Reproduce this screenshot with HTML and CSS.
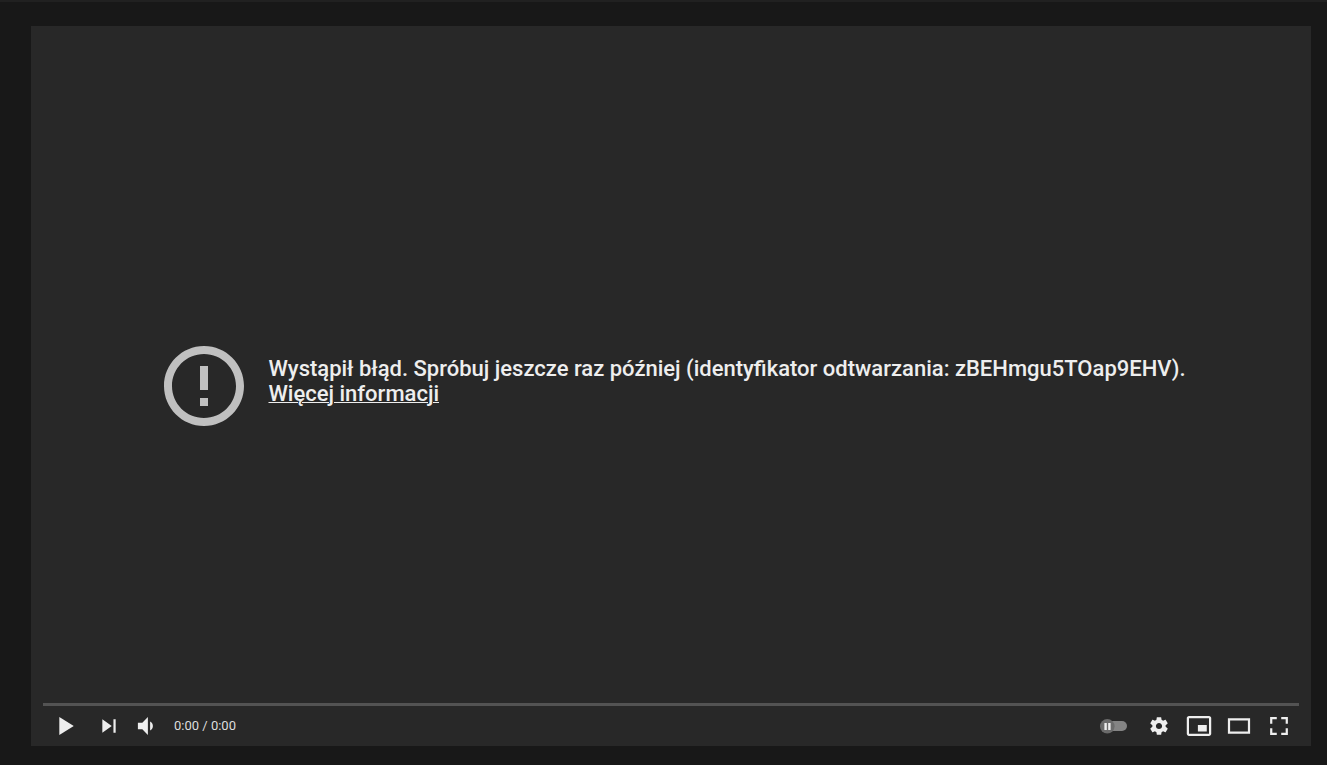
FILE: index.html
```html
<!DOCTYPE html>
<html lang="pl">

<head>
    <meta charset="UTF-8">
    <meta name="viewport" content="width=device-width, initial-scale=1.0">
    <title>Odtwarzacz wideo</title>
    <link rel="stylesheet" href="styles.css">
</head>

<body>
    <main class="player">
        <!-- Error message -->
        <div class="error">
            <svg class="error-icon" viewBox="0 0 24 24" aria-hidden="true">
                <path d="M11 15h2v2h-2v-2zm0-8h2v6h-2V7zm1-5C6.48 2 2 6.48 2 12s4.48 10 10 10 10-4.48 10-10S17.52 2 12 2zm0 18c-4.42 0-8-3.58-8-8s3.58-8 8-8 8 3.58 8 8-3.58 8-8 8z"/>
            </svg>
            <div class="error-text">
                Wystąpił błąd. Spróbuj jeszcze raz później (identyfikator odtwarzania: zBEHmgu5TOap9EHV).<br>
                <a href="#">Więcej informacji</a>
            </div>
        </div>

        <!-- Bottom controls -->
        <div class="controls">
            <div class="progress"></div>
            <div class="buttons">
                <button class="btn play" aria-label="Odtwórz">
                    <svg viewBox="0 0 36 36"><path d="M12 10v16l13-8z"/></svg>
                </button>
                <button class="btn" aria-label="Następny">
                    <svg viewBox="0 0 36 36"><path d="M12 24l8.5-6L12 12v12zM22 12v12h2V12h-2z"/></svg>
                </button>
                <button class="btn" aria-label="Wycisz">
                    <svg viewBox="0 0 36 36"><path d="M8 21h4l5 5V10l-5 5H8v6zM19 14v8c1.48-.73 2.5-2.25 2.5-4S20.48 14.73 19 14z"/></svg>
                </button>
                <span class="time">0:00 / 0:00</span>

                <button class="btn autoplay" aria-label="Autoodtwarzanie">
                    <svg viewBox="0 0 40 40">
                        <rect class="track" x="7" y="15" width="25" height="10" rx="5"/>
                        <circle class="knob" cx="12.3" cy="20.3" r="7.3"/>
                        <path d="M9.4 17h2.4v7H9.4zM13.2 17h2.4v7h-2.400z"/>
                    </svg>
                </button>
                <button class="btn" aria-label="Ustawienia">
                    <svg viewBox="0 0 36 36"><path d="m23.94 18.78c.03-.25.05-.51.05-.78 0-.27-.02-.52-.05-.78l1.68-1.32c.15-.12.19-.33.09-.51l-1.6-2.76c-.09-.17-.31-.24-.48-.17l-1.99.8c-.41-.32-.86-.58-1.35-.78l-.3-2.12c-.02-.19-.19-.33-.39-.33h-3.2c-.2 0-.36.14-.39.33l-.3 2.12c-.48.2-.93.47-1.35.78l-1.99-.8c-.18-.07-.39 0-.48.17l-1.6 2.76c-.1.17-.05.39.09.51l1.68 1.32c-.03.25-.05.52-.05.78 0 .26.02.52.05.78l-1.68 1.32c-.15.12-.19.33-.09.51l1.6 2.76c.09.17.31.24.48.17l1.99-.8c.41.32.86.58 1.35.78l.3 2.12c.02.19.19.33.39.33h3.2c.2 0 .36-.14.39-.33l.3-2.12c.48-.2.93-.47 1.35-.78l1.99.8c.18.07.39 0 .48-.17l1.6-2.76c.09-.17.05-.39-.09-.51l-1.68-1.32zm-5.94 2.01c-1.54 0-2.8-1.25-2.8-2.8 0-1.54 1.25-2.8 2.8-2.8 1.54 0 2.8 1.25 2.8 2.8 0 1.54-1.25 2.8-2.8 2.8z"/></svg>
                </button>
                <button class="btn" aria-label="Miniodtwarzacz">
                    <svg viewBox="0 0 36 36"><path d="M25 17h-8v6h8v-6zm4 8V10.980C29 9.880 28.100 9 27 9H9c-1.100 0-2 .880-2 1.980V25c0 1.100.900 2 2 2h18c1.100 0 2-.900 2-2zm-2 .020H9V10.970h18v14.050z"/></svg>
                </button>
                <button class="btn" aria-label="Tryb kinowy">
                    <svg viewBox="0 0 36 36"><path fill-rule="evenodd" d="M8 11v14h20V11H8zm18 12H10V13h16v10z"/></svg>
                </button>
                <button class="btn" aria-label="Pełny ekran">
                    <svg viewBox="0 0 36 36"><path d="M10 16h2v-4h4v-2h-6v6zM20 10v2h4v4h2v-6h-6zM24 24h-4v2h6v-6h-2v4zM12 20h-2v6h6v-2h-4v-4z"/></svg>
                </button>
            </div>
        </div>
    </main>
</body>

</html>
```

FILE: styles.css
```css
* {
    box-sizing: border-box;
}

body {
    display: flex;
    min-height: 100vh;
    margin: 0;
    padding: 24px 16px 19px 31px;
    border-top: 2px solid #212121;
    background: #181818;
    color: #eee;
    font-family: Roboto, sans-serif;
}

/* message and controls share one grid cell */
.player {
    flex: 1;
    display: grid;
    background: #282828;
}

.error,
.controls {
    grid-area: 1 / 1;
}

.error {
    display: flex;
    align-items: center;
    justify-content: center;
    gap: 16px;
}

.error-icon {
    flex: none;
    width: 96px;
    height: 96px;
    fill: #c0c0c0;
}

.error-text {
    padding-bottom: 10px;
    font-size: 22px;
    font-weight: 500;
    line-height: 25px;
}

.error-text a {
    color: inherit;
    text-decoration-thickness: 1px;
}

.controls {
    align-self: end;
    padding: 0 12px;
}

.progress {
    height: 3px;
    background: #535353;
}

.buttons {
    display: flex;
    align-items: center;
    height: 40px;
}

.btn {
    width: 40px;
    height: 40px;
    padding: 0;
    border: none;
    background: none;
    cursor: pointer;
}

.btn svg {
    display: block;
    width: 40px;
    height: 40px;
    fill: #eee;
}

.play {
    width: 46px;
    padding-left: 3px;
}

.time {
    padding: 0 5px;
    color: #ddd;
    font-size: 13px;
    line-height: 16px;
}

.autoplay {
    margin-left: auto;
    margin-right: 4px;
}

.autoplay .track {
    fill: #848484;
}

.autoplay .knob {
    fill: #6b6b6b;
}
```
